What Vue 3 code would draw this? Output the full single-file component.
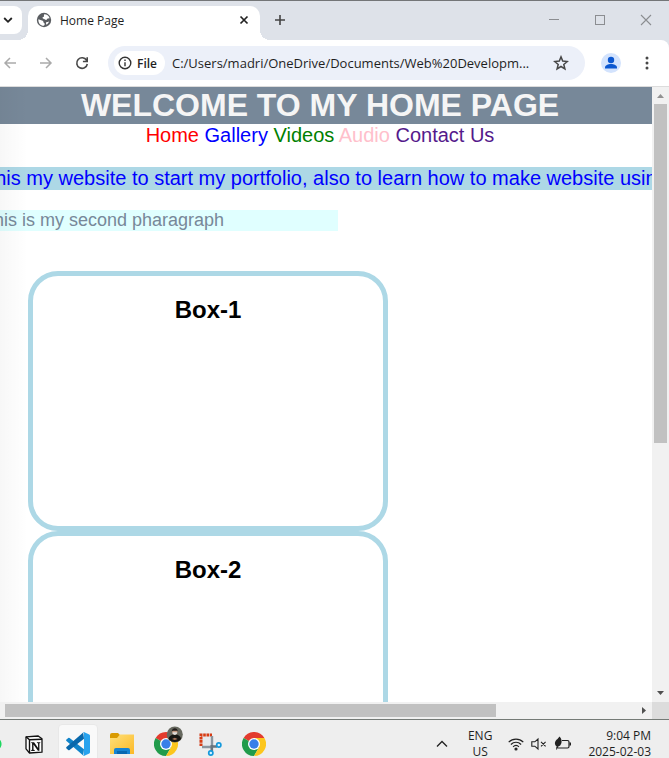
<script setup>
import { ref } from 'vue'

const address = ref('C:/Users/madri/OneDrive/Documents/Web%20Developm...')

const links = [
  { label: 'Home', tone: 'red' },
  { label: 'Gallery', tone: 'blue' },
  { label: 'Videos', tone: 'green' },
  { label: 'Audio', tone: 'pink' },
  { label: 'Contact Us', tone: 'purple' },
]

const boxes = ['Box-1', 'Box-2']
</script>

<template>
  <div class="desktop">
    <div class="browser">
      <header class="tabstrip">
        <button class="tab-search" aria-label="Search tabs">
          <svg width="10" height="10" viewBox="0 0 10 10"><path d="M1.2 3 5 6.8 8.8 3" fill="none" stroke="#222" stroke-width="1.8" /></svg>
        </button>
        <div class="tab">
          <svg width="16" height="16" viewBox="0 0 16 16">
            <circle cx="8" cy="8" r="7.2" fill="#5a5d61" />
            <path d="M2.4 7.2 6 8.6c1 .4 1.600 1 1.500 2l.8.6c.9.6.3 1.800-.6 2.500C4.500 13.700 2 11 2.400 7.200Z" fill="#fff" />
            <path d="M8.300 2.300c2.500 0 4.600 1.600 5.300 3.900l-1.800.2c-.8.100-.8 1.400-1.700 1.500-1 .1-1.100-.9-2-1-.9 0-1.700-.4-1.600-1.300.1-.8 1.300-.5 1.500-1.200.1-.7-.4-1.400.3-2.100Z" fill="#fff" />
            <path d="M10.300 10.300c1 0 1.700-.6 2.700-.7-.4 1.300-1.300 2.400-2.400 3.100-.5-.7-.9-1.900-.3-2.400Z" fill="#fff" />
          </svg>
          <span class="tab-title">Home Page</span>
          <button class="plain" aria-label="Close tab">
            <svg width="16" height="16" viewBox="0 0 16 16"><path d="m4.500 4.500 7 7m0-7-7 7" stroke="#222" stroke-width="1.700" /></svg>
          </button>
        </div>
        <button class="plain new-tab" aria-label="New tab">
          <svg width="14" height="14" viewBox="0 0 14 14"><path d="M7 2v10M2 7h10" stroke="#444" stroke-width="1.600" /></svg>
        </button>
        <div class="window-controls">
          <button class="plain" aria-label="Minimize"><svg width="12" height="12" viewBox="0 0 12 12"><path d="M1 5.500h10" stroke="#8b8d91" /></svg></button>
          <button class="plain" aria-label="Maximize"><svg width="12" height="12" viewBox="0 0 12 12"><rect x="1.500" y="1.500" width="9" height="9" fill="none" stroke="#8b8d91" /></svg></button>
          <button class="plain" aria-label="Close window"><svg width="12" height="12" viewBox="0 0 12 12"><path d="m1 1 10 10m0-10L1 11" stroke="#8b8d91" stroke-width="1.100" /></svg></button>
        </div>
      </header>

      <div class="toolbar-back">
        <div class="toolbar">
          <button class="plain nav" aria-label="Back"><svg width="16" height="16" viewBox="0 0 16 16"><path d="M14 8H3m5-5L3 8l5 5" fill="none" stroke="#aaa" stroke-width="1.500" /></svg></button>
          <button class="plain nav" aria-label="Forward"><svg width="16" height="16" viewBox="0 0 16 16"><path d="M2 8h11M8 3l5 5-5 5" fill="none" stroke="#aaa" stroke-width="1.500" /></svg></button>
          <button class="plain nav" aria-label="Reload"><svg width="16" height="16" viewBox="0 0 16 16"><path d="M12.600 5.300A5.300 5.300 0 1 0 13.300 9M13.200 2.200v4.300H8.900" fill="none" stroke="#474747" stroke-width="1.600" /></svg></button>
          <div class="omnibox">
            <button class="file-chip">
              <svg width="14" height="14" viewBox="0 0 14 14"><circle cx="7" cy="7" r="5.800" fill="none" stroke="#333" stroke-width="1.400" /><path d="M7 6.200v4M7 3.600v1.500" stroke="#333" stroke-width="1.400" /></svg>
              <span>File</span>
            </button>
            <input v-model="address" class="address" type="text" aria-label="Address" spellcheck="false" />
            <button class="plain" aria-label="Bookmark">
              <svg width="16" height="16" viewBox="0 0 16 16"><path d="m8 1.900 1.700 4.200 4.600.4-3.500 3 1.100 4.400L8 11.500l-3.900 2.400 1.100-4.400-3.500-3 4.600-.4L8 1.900Z" fill="none" stroke="#474747" stroke-width="1.500" /></svg>
            </button>
          </div>
          <button class="plain" aria-label="Profile">
            <svg width="20" height="20" viewBox="0 0 20 20"><circle cx="10" cy="10" r="10" fill="#d3e3fd" /><circle cx="10" cy="7" r="3.200" fill="#0b57d0" /><path d="M4 15.500v-1c0-2.300 3-3.500 6-3.500s6 1.200 6 3.500v1Z" fill="#0b57d0" /></svg>
          </button>
          <button class="plain menu" aria-label="Menu">
            <svg width="16" height="16" viewBox="0 0 16 16" fill="#474747"><circle cx="8" cy="3" r="1.500" /><circle cx="8" cy="8" r="1.500" /><circle cx="8" cy="13" r="1.500" /></svg>
          </button>
        </div>
      </div>

      <div class="viewport">
        <main class="page">
          <div class="sheet">
            <h1>WELCOME TO MY HOME PAGE</h1>
            <nav class="links">
              <template v-for="link in links" :key="link.label"><a href="#" :class="link.tone">{{ link.label }}</a>{{ ' ' }}</template>
            </nav>
            <p class="intro">This my website to start my portfolio, also to learn how to make website using</p>
            <p class="second">This is my second pharagraph</p>
            <div class="boxes">
              <section v-for="name in boxes" :key="name" class="box"><h2>{{ name }}</h2></section>
            </div>
          </div>
        </main>
        <div class="scroll-y">
          <svg width="17" height="17" viewBox="0 0 17 17"><path d="M5 11h7L8.500 7Z" fill="#929292" /></svg>
          <div class="track-y"><div class="thumb-y"></div></div>
          <svg width="17" height="17" viewBox="0 0 17 17"><path d="M5 6h7l-3.500 4Z" fill="#505050" /></svg>
        </div>
      </div>
      <div class="scroll-x">
        <div class="track-x"><div class="thumb-x"></div></div>
        <svg width="17" height="17" viewBox="0 0 17 17"><path d="M7 5v7l4-3.500Z" fill="#505050" /></svg>
        <div class="corner"></div>
      </div>
    </div>

    <footer class="taskbar">
      <div class="apps">
        <span class="running"></span>
        <button class="app" aria-label="Notion">
          <svg width="18" height="19" viewBox="0 0 18 19">
            <path d="M1 1.800 13.200 1 17 3.800v13.400L4.500 18 1 13.800Z" fill="#fff" stroke="#111" stroke-width="1.300" stroke-linejoin="round" />
            <path d="m1 1.800 3.500 3L17 4.200M4.500 4.800V18" fill="none" stroke="#111" stroke-width="1.400" />
            <path d="M6.200 7.200h2.900l4 5.700V8.200l-1.200-.2v-.8h3.400V8l-.9.300v7.400h-1.500L8.500 9.500v5.300l1.200.3v.8H6.200v-.8l.9-.3V8.300L6.200 8Z" fill="#111" />
          </svg>
        </button>
        <button class="app active" aria-label="Visual Studio Code">
          <svg width="24" height="24" viewBox="0 0 24 24">
            <path d="M17.200 23.600 18 17.200 3.600 6.100q-.7-.5-1.400 0L.5 7.600q-.8.700 0 1.500Z" fill="#1184ca" />
            <path d="M17.200.4 18 6.800 3.600 17.900q-.7.500-1.400 0L.5 16.400q-.8-.7 0-1.500Z" fill="#0968ab" />
            <path d="M17.200.2q.6-.3 1.200 0l4.800 2.300q.8.400.8 1.300v16.400q0 .9-.8 1.300l-4.800 2.300q-.6.300-1.200 0l.8-1V1.200Z" fill="#28a3ee" />
          </svg>
        </button>
        <button class="app" aria-label="File Explorer">
          <svg width="24" height="24" viewBox="0 0 24 24">
            <defs><linearGradient id="folder" x1="0" y1="0" x2="1" y2="1"><stop stop-color="#ffe07a" /><stop offset="1" stop-color="#fbb927" /></linearGradient></defs>
            <path d="M0 3q0-2 2-2h6l3 3h-1L8 6H0Z" fill="#d99a00" />
            <path d="M0 6h7l3-3.500h14V22H0Z" fill="url(#folder)" />
            <path d="M4 22v-4q0-2 2-2h12q2 0 2 2v4Z" fill="#1684d3" /><path d="M7 19h10v3H7Z" fill="#0868b1" />
          </svg>
        </button>
        <button class="app" aria-label="Chrome profile window">
          <svg class="overhang" width="30" height="30" viewBox="0 0 30 30">
            <path d="M12 18 1.600 12A12 12 0 0 1 22.400 12Z" fill="#e33b2e" />
            <path d="M12 18 1.600 12A12 12 0 0 0 12 30l5.200-9Z" fill="#219b4b" />
            <path d="M12 12h10.400A12 12 0 0 1 12 30l5.200-9Z" fill="#fcc61d" />
            <circle cx="12" cy="18" r="6" fill="#fff" /><circle cx="12" cy="18" r="4.700" fill="#397fe8" />
            <circle cx="20.800" cy="8.500" r="8" fill="#66685f" />
            <path d="M14.500 13c.5-3 2.500-4.500 6.300-4.500s5.800 1.500 6.300 4.500a8 8 0 0 1-12.600 0Z" fill="#171614" />
            <circle cx="20.800" cy="6" r="2.700" fill="#c79c85" /><path d="M17.800 5.500c0-4.500 6-4.500 6 0l-1-.8h-4Z" fill="#211d1b" /><path d="M18.700 6.200h4.200v1.500l-2.100 1.200-2.100-1.200Z" fill="#ddd" /><path d="m18 13 2.800-1.200 2.800 1.200-2.800 1Z" fill="#a9745b" />
          </svg>
        </button>
        <button class="app" aria-label="Snipping Tool">
          <svg width="24" height="24" viewBox="0 0 24 24">
            <path d="M1 1h13v13H1Z" fill="#e7e9ec" />
            <path d="M3 14V3h11" fill="none" stroke="#d83b12" stroke-width="3" stroke-dasharray="2.600 .7" />
            <path d="M14 4v11M4 15h11" stroke="#8b969f" stroke-width="2.400" />
            <path d="M13.800 13v6M13 14.500h6" stroke="#69757e" stroke-width="2.600" />
            <circle cx="20.800" cy="13" r="2.100" fill="#d9f2ff" stroke="#1499dc" stroke-width="1.700" /><circle cx="12.800" cy="21" r="2.100" fill="#d9f2ff" stroke="#1499dc" stroke-width="1.700" />
          </svg>
        </button>
        <button class="app" aria-label="Chrome">
          <svg width="24" height="24" viewBox="0 0 24 24">
            <path d="M12 12 1.600 6A12 12 0 0 1 22.400 6Z" fill="#e33b2e" />
            <path d="M12 12 1.600 6A12 12 0 0 0 12 24l5.200-9Z" fill="#219b4b" />
            <path d="M12 6h10.400A12 12 0 0 1 12 24l5.200-9Z" fill="#fcc61d" />
            <circle cx="12" cy="12" r="6" fill="#fff" /><circle cx="12" cy="12" r="4.700" fill="#397fe8" />
          </svg>
        </button>
      </div>
      <div class="tray">
        <button class="plain" aria-label="Show hidden icons"><svg width="12" height="12" viewBox="0 0 12 12"><path d="m1 8.500 5-5 5 5" fill="none" stroke="#222" stroke-width="1.300" /></svg></button>
        <button class="plain lang">ENG<br />US</button>
        <button class="plain status" aria-label="Network, volume and battery">
          <svg width="16" height="16" viewBox="0 0 16 16" fill="none" stroke="#222" stroke-width="1.200"><path d="M.7 6.200c4.100-4.200 10.500-4.200 14.600 0M2.900 8.500c2.900-3 7.300-3 10.200 0M5.100 10.800c1.700-1.800 4.100-1.800 5.800 0" /><circle cx="8" cy="13" r="1" fill="#222" /></svg>
          <svg width="16" height="16" viewBox="0 0 16 16" fill="none" stroke="#222" stroke-width="1.100"><path d="M.8 5.800h3L7 3v10l-3.200-2.800h-3ZM10 5.800l4.600 4.600m0-4.600L10 10.400" /></svg>
          <svg width="18" height="16" viewBox="0 0 18 16"><path d="M8 4.500h5.500q1.500 0 1.500 1.500v4.500q0 1.500-1.500 1.500h-9q-1.500 0-1.500-1" fill="none" stroke="#222" stroke-width="1.200" /><path d="M15.500 6.500H17v3h-1.500Z" fill="#222" /><path d="M5.500.5C8 3 8.400 6.500 6.200 9.500L3.500 11 3 13.500H2l.7-3C0 8.500.5 5 3.500 3Z" fill="#222" /></svg>
        </button>
        <time class="clock" datetime="2025-02-03T21:04">9:04 PM<br />2025-02-03</time>
      </div>
    </footer>
  </div>
</template>

<style>
body {
  margin: 0;
}
</style>

<style scoped>
* {
  box-sizing: border-box;
}
svg {
  display: block;
  flex: none;
}
.desktop {
  display: flex;
  flex-direction: column;
  height: 100vh;
  overflow: hidden;
  background: #fff;
  color: #1f1f1f;
  font-family: "Open Sans", "Noto Sans", sans-serif;
  font-size: 12px;
}
.browser {
  display: flex;
  flex: 1;
  flex-direction: column;
  min-height: 0;
  border-top: 1px solid #747678;
  border-bottom: 1px solid #747a76;
}
button {
  font: inherit;
  color: inherit;
}
.plain {
  display: flex;
  align-items: center;
  justify-content: center;
  padding: 0;
  border: 0;
  background: none;
}
.tabstrip {
  display: flex;
  align-items: flex-start;
  height: 39px;
  padding-top: 5px;
  background: #dee2e9;
}
.tab-search {
  display: flex;
  align-items: center;
  width: 22px;
  height: 28px;
  padding: 0 0 0 3px;
  border: 0;
  border-radius: 0 8px 8px 0;
  background: #fff;
}
.tab {
  position: relative;
  display: flex;
  align-items: center;
  gap: 8px;
  width: 232px;
  height: 34px;
  margin-left: 6px;
  padding: 0 8px 6px;
  border-radius: 10px 10px 0 0;
  background: #fff;
}
.tab::before,
.tab::after {
  content: "";
  position: absolute;
  bottom: 0;
  width: 10px;
  height: 10px;
}
.tab::before {
  right: 100%;
  background: radial-gradient(circle at 0 0, transparent 10px, #fff 10px);
}
.tab::after {
  left: 100%;
  background: radial-gradient(circle at 100% 0, transparent 10px, #fff 10px);
}
.tab-title {
  flex: 1;
}
.new-tab {
  height: 28px;
  margin-left: 13px;
}
.window-controls {
  display: flex;
  gap: 34px;
  height: 28px;
  margin-left: auto;
  padding-right: 17px;
}
.toolbar-back {
  background: #dee2e9;
}
.toolbar {
  display: flex;
  align-items: center;
  height: 47px;
  padding: 0 14px 0 2px;
  border-bottom: 1px solid #dcdcdc;
  border-top-right-radius: 8px;
  background: #fff;
}
.nav {
  margin-right: 20px;
}
.omnibox {
  display: flex;
  flex: 1;
  align-items: center;
  min-width: 0;
  height: 34px;
  margin-right: 16px;
  margin-left: -2px;
  padding: 0 16px 0 6px;
  border-radius: 17px;
  background: #ecf0f9;
}
.file-chip {
  display: flex;
  align-items: center;
  gap: 5px;
  height: 24px;
  padding: 0 8px 0 4px;
  border: 0;
  border-radius: 12px;
  background: #fff;
  font-weight: 600;
}
.address {
  flex: 1;
  min-width: 0;
  margin-left: 7px;
  padding: 0;
  border: 0;
  outline: 0;
  background: none;
  color: #1f1f1f;
  font: 13px "Open Sans", "Noto Sans", sans-serif;
}
.menu {
  margin-left: 18px;
}
.viewport {
  display: flex;
  flex: 1;
  min-height: 0;
}
.page {
  position: relative;
  flex: 1;
  min-width: 0;
  overflow: hidden;
  color: #000;
  font-family: "Liberation Sans", Arial, sans-serif;
}
.page::before {
  content: "";
  position: absolute;
  inset: 0 auto 0 0;
  width: 28px;
  background: linear-gradient(90deg, rgba(0, 0, 0, 0.03), transparent);
}
.sheet {
  margin-left: -12px;
}
h1 {
  margin: 0;
  background: #778899;
  color: #f5f5f5;
  font-size: 32px;
  line-height: 37px;
  text-align: center;
}
.links {
  font-size: 20px;
  line-height: 23px;
  text-align: center;
}
.links a {
  text-decoration: none;
}
.red { color: #ff0000; }
.blue { color: #0000ff; }
.green { color: #008000; }
.pink { color: #ffc0cb; }
.purple { color: #551a8b; }
.intro,
.second {
  text-indent: -5px;
}
.intro {
  margin: 20px 0;
  background: #add8e6;
  color: #0000ff;
  font-size: 20px;
  line-height: 23px;
  white-space: nowrap;
}
.second {
  width: 350px;
  margin: 0;
  background: #e0ffff;
  color: #778899;
  font-size: 18px;
  line-height: 21px;
}
.boxes {
  padding: 40px 0 0 40px;
}
.box {
  width: 360px;
  height: 260px;
  padding-top: 20px;
  border: 5px solid #add8e6;
  border-radius: 30px;
  text-align: center;
}
h2 {
  margin: 0;
  font-size: 24px;
  line-height: 28px;
}
.scroll-y {
  display: flex;
  flex-direction: column;
  width: 17px;
  background: #f1f1f1;
}
.track-y {
  display: grid;
  flex: 1;
  grid-template-rows: 7fr 5fr;
  padding: 0 2px;
}
.thumb-y {
  background: #c1c1c1;
}
.scroll-x {
  display: flex;
  height: 17px;
  background: #f1f1f1;
}
.track-x {
  flex: 1;
  padding: 2px 0 2px 5px;
}
.thumb-x {
  width: 78%;
  height: 13px;
  background: #c1c1c1;
}
.corner {
  width: 17px;
  background: #dcdcdc;
}
.taskbar {
  display: flex;
  justify-content: space-between;
  height: 38px;
  overflow: hidden;
  background: #eee;
}
.apps {
  display: flex;
  gap: 4px;
  padding-top: 4px;
}
.running {
  width: 10px;
  height: 14px;
  margin-top: 13px;
  background: radial-gradient(circle at -5px 7px, #1ed760 6px, transparent 7px);
}
.app {
  display: flex;
  align-items: center;
  justify-content: center;
  width: 40px;
  height: 40px;
  padding: 0;
  border: 1px solid transparent;
  border-radius: 4px;
  background: none;
}
.active {
  border-color: #e8e8e8;
  background: #f9f9f9;
}
.overhang {
  margin-bottom: 6px;
  margin-left: 6px;
}
.tray {
  display: flex;
  align-items: center;
  gap: 16px;
  height: 48px;
  padding-right: 18px;
}
.tray .plain {
  gap: 7px;
}
.lang,
.clock {
  font-size: 12px;
  line-height: 16px;
}
.lang {
  margin-left: 4px;
}
.clock {
  text-align: right;
}
</style>
